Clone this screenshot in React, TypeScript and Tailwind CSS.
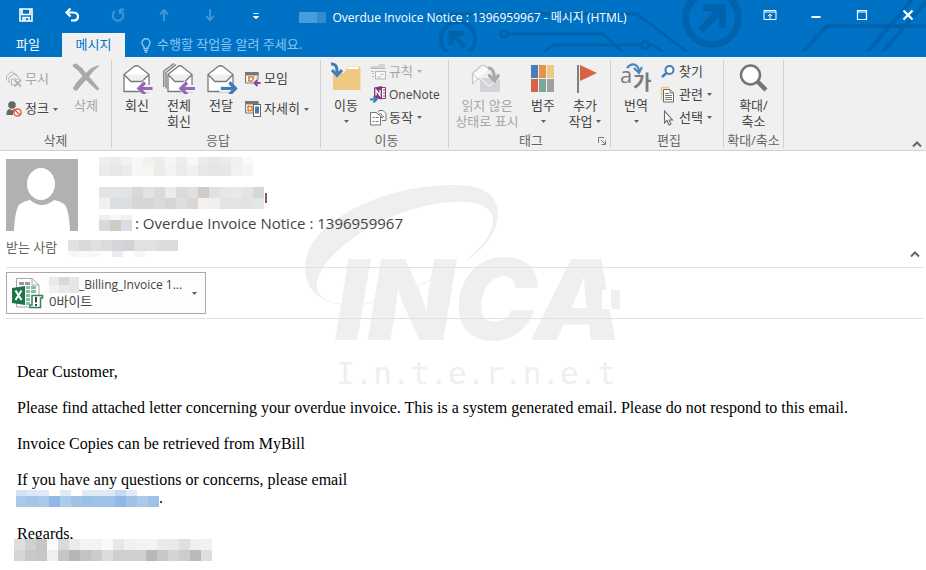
import type { ReactNode } from 'react';

// ---------------- MOSAIC (redacted text) ----------------
interface MosaicRow {
  h: number;
  c: string;
}

function Mosaic({ rows, cell = 11, className = '' }: { rows: MosaicRow[]; cell?: number; className?: string }) {
  const cols = Math.max(...rows.map((r) => r.c.split(' ').length));
  const height = rows.reduce((sum, r) => sum + r.h, 0);
  let y = 0;
  return (
    <svg aria-hidden="true" className={`shrink-0 ${className}`} width={cols * cell} height={height} shapeRendering="crispEdges">
      {rows.map((r, i) => {
        const top = y;
        y += r.h;
        return r.c.split(' ').map((color, j) =>
          color === '-' ? null : <rect key={`${i}-${j}`} x={j * cell} y={top} width={cell} height={r.h} fill={`#${color}`} />
        );
      })}
    </svg>
  );
}

// ---------------- ICONS ----------------
const Envelope = () => (
  <path d="M2 12.500 L12 4.500 Q14.500 3 17 4.500 L27 12.500 V29.500 H2 Z M2 12.500 L9 19.500 H20 L27 12.500" fill="#fff" stroke="#7a7a7a" strokeWidth="1.300" />
);

const ArrowLeft = () => (
  <path d="M30.500 26.500 H17 M23 20.500 L17 26.500 L23 32.500" fill="none" stroke="#9467b8" strokeWidth="3.200" />
);

const icons: Record<string, ReactNode> = {
  ignore: (
    <svg width="16" height="16" fill="none" stroke="#b4b4b4">
      <path d="M.5 9.500 V5 L5.500 .8 L11 4 M3 12 V6.500 L8 3 L13 6 M10 14 H5.500 V8 H15" />
      <path d="M8.500 9 L15 15.500 M15 9 L8.500 15.500" strokeWidth="1.800" />
    </svg>
  ),
  junk: (
    <svg width="16" height="16">
      <circle cx="6" cy="4" r="3.800" fill="#666" />
      <path d="M.5 14 Q0 8.500 4 8 L6 9.500 L8 8 L9 8.500 Q6.500 10.500 7 14 Z" fill="#666" />
      <circle cx="11.500" cy="11.500" r="3.600" fill="#fff" stroke="#d9603f" strokeWidth="1.500" />
      <path d="M9 9 L14 14" stroke="#d9603f" strokeWidth="1.500" />
    </svg>
  ),
  remove: (
    <svg width="32" height="32">
      <path d="M2.500 5 Q4 1.500 7 3 Q12 6 16 12 Q22 5 30 4 Q23 10 19 15.500 Q24 21 29.500 28 L27 29.500 Q21 24 16 19 Q11 24 7.500 29 Q4 31 3 27 Q7 20 12.500 15 Q8 9 2.500 5 Z" fill="#a9a9a9" />
    </svg>
  ),
  reply: (
    <svg width="34" height="33" viewBox="-2 -1 34 33" className="-mb-px">
      <Envelope />
      <path d="M13.500 26.500 L22 18 V23 H31 V30 H22 V33 Z" fill="#f0f0f0" />
      <ArrowLeft />
    </svg>
  ),
  replyAll: (
    <svg width="34" height="33" viewBox="-1 -1 34 33" className="-mb-px">
      <path d="M.8 25 V9 L11 1.500 M3 26.500 V10.500 L13 2.500" fill="none" stroke="#7a7a7a" strokeWidth="1.300" />
      <g transform="translate(3 0)">
        <path d="M2 12.500 L12 4.500 Q14 3 16 4.500 L26 12.500 V29.500 H2 Z M2 12.500 L9 19.500 H19 L26 12.500" fill="#fff" stroke="#7a7a7a" strokeWidth="1.300" />
      </g>
      <path d="M14.500 26.500 L22 18 V23 H32 V30 H22 V33 Z" fill="#f0f0f0" />
      <path d="M32 26.500 H18 M24 20.500 L18 26.500 L24 32.500" fill="none" stroke="#9467b8" strokeWidth="3.200" />
    </svg>
  ),
  forward: (
    <svg width="34" height="33" viewBox="-2 -1 34 33" className="-mb-px">
      <Envelope />
      <path d="M13.500 24 H22 V18 L31 26.500 L24 33 V30 H13.500 Z" fill="#f0f0f0" />
      <path d="M15 26.500 H29 M23.500 20.500 L29.500 26.500 L23.500 32.500" fill="none" stroke="#3f7cb8" strokeWidth="3.200" />
    </svg>
  ),
  meeting: (
    <svg width="16" height="16">
      <path d="M.5 1.500 H13 V12 H.5 Z" fill="#fff" stroke="#777" />
      <path d="M0 1 H13.500 V4.500 H0 Z" fill="#777" />
      <path d="M3.500 5 V12 M9.500 5 V12 M1 7 H13 M1 10 H13" stroke="#bbb" strokeDasharray="1 1" />
      <rect x="4" y="6" width="4" height="4" fill="#fff" stroke="#e07b28" strokeWidth="1.500" />
      <path d="M8 9 H16 V15 H8 Z" fill="#f0f0f0" />
      <path d="M15.500 12 H10 M12.500 9 L9.500 12 L12.500 15" fill="none" stroke="#8246a8" strokeWidth="2" />
    </svg>
  ),
  more: (
    <svg width="16" height="16">
      <path d="M.5 .8 H13 V12 H.5 Z" fill="#fff" stroke="#777" />
      <path d="M0 0 H13.500 V3.500 H0 Z" fill="#777" />
      <path d="M3.500 4 V12 M1 6 H8 M1 10 H8" stroke="#bbb" strokeDasharray="1 1" />
      <rect x="3" y="5.500" width="4" height="4" fill="#fff" stroke="#e07b28" strokeWidth="1.500" />
      <rect x="8.500" y="3.500" width="7" height="12" fill="#fff" stroke="#666" />
      <rect x="10" y="5.500" width="4" height="7" fill="#3f7cb8" />
    </svg>
  ),
  move: (
    <svg width="32" height="32">
      <path d="M3 12 H14 L18 5 H29 L30.500 7 V29 H3 Z" fill="#efc981" />
      <path d="M18.500 5.500 H28.500 V8 H17 Z" fill="#fff" />
      <path d="M1 0 H10 V8 H15 L7 17 L2 12 Z" fill="#f0f0f0" />
      <path d="M1 3 Q7 2.500 7 10 V13 M2 9 L7 14.500 L12 9" fill="none" stroke="#3f7cb8" strokeWidth="3" />
    </svg>
  ),
  rules: (
    <svg width="16" height="16" fill="none" stroke="#b8b8b8">
      <path d="M1 5 V2.500 H8 L9.500 .5 H14.500 V5" fill="#d2d2d2" stroke="#d2d2d2" />
      <path d="M1 4.500 H15 M1 7.500 H4 M2 9.500 H4 M2 12.500 H4" />
      <rect x="5.500" y="7.500" width="10" height="7.500" fill="#f8f8f8" />
      <path d="M10.500 10.500 H13.500 M7 13 H11" />
    </svg>
  ),
  onenote: (
    <svg width="17" height="17">
      <path d="M9 1.500 H15.500 V12.500 H9 Z" fill="#fff" stroke="#80397b" />
      <path d="M13 4 H16 M13 7 H16 M13 10 H16" stroke="#80397b" />
      <path d="M4 1.500 L12 0 V13.500 L4 12 Z" fill="#80397b" />
      <path d="M6 9.500 V4 L10 9.500 V4" fill="none" stroke="#fff" strokeWidth="1.300" />
      <path d="M0 13.500 H6 M3.500 10.500 L6.500 13.500 L3.500 16.500" fill="none" stroke="#3f7cb8" strokeWidth="2" />
    </svg>
  ),
  actions: (
    <svg width="17" height="16" fill="none" stroke="#777">
      <path d="M8 2.500 L9 .5 H13 L16 3.500 V10.500 H12" fill="#f8f8f8" />
      <path d="M.5 2.500 H6 L10.500 6 V15 H.5 Z" fill="#fff" />
      <path d="M2.500 7.500 H4.500 M5.500 7.500 H8.500 M2.500 11.500 H4.500 M5.500 11.500 H8.500 M9 4 Q12 2.500 12 7 M10 6 L12 8 L14 6" />
    </svg>
  ),
  unread: (
    <svg width="32" height="32" viewBox="2 0 32 32">
      <path d="M3.500 23 V12.500 L12 5 Q14 3.500 16 5 L20 8" fill="#fafafa" stroke="#c4c4c4" strokeWidth="1.200" />
      <path d="M3.500 13 L9 18 M3.500 23 L9 18 H16" fill="none" stroke="#c4c4c4" />
      <path d="M11 17 H31 V31 H11 Z" fill="#d6d3d8" />
      <path d="M11 17 L20 25 L31 17" fill="none" stroke="#f2f2f2" strokeWidth="1.200" />
      <path d="M19 7 Q25 6.500 25.500 18 M19.500 13.500 L25.500 20 L30 13.500" fill="none" stroke="#a9a9a9" strokeWidth="3.200" />
    </svg>
  ),
  categories: (
    <svg width="32" height="32" viewBox="1 0 32 32" shapeRendering="crispEdges">
      <rect x="5" y="4" width="7" height="13" fill="#4a7ebb" />
      <rect x="13" y="4" width="7" height="13" fill="#e69248" />
      <rect x="21" y="4" width="7" height="13" fill="#efc981" />
      <rect x="5" y="18" width="7" height="13" fill="#d96245" />
      <rect x="13" y="18" width="7" height="13" fill="#79a898" />
      <rect x="21" y="18" width="7" height="13" fill="#a0a0a0" />
    </svg>
  ),
  flag: (
    <svg width="32" height="32" viewBox="1 0 32 32">
      <path d="M9 4 H11 V32 H9 Z" fill="#808080" />
      <path d="M12 4 L29 12 L12 20 Z" fill="#d96245" />
    </svg>
  ),
  translate: (
    <svg width="32" height="32" className="overflow-visible">
      <text x="0" y="22" fontSize="22" fill="#7a7a7a" className="font-['Open_Sans',sans-serif]">a</text>
      <text x="13" y="29" fontSize="20" fontWeight="600" fill="#7a7a7a" className="font-['Noto_Sans_CJK_KR',sans-serif]">가</text>
      <path d="M7 7 Q12 1 17 5 Q19 7 19 11 M14 7 L19 12 L22 6" fill="none" stroke="#4a85c0" strokeWidth="2.200" />
    </svg>
  ),
  find: (
    <svg width="16" height="16" fill="none" stroke="#3f7cb8">
      <circle cx="9.500" cy="6" r="4" strokeWidth="2" fill="#fff" />
      <path d="M6.500 9 L2 13" strokeWidth="2.500" />
    </svg>
  ),
  related: (
    <svg width="16" height="17">
      <path d="M1.500 14 V1.500 H9" fill="none" stroke="#efc981" strokeWidth="1.500" />
      <path d="M3.500 3.500 H10 L13.500 7 V16 H3.500 Z" fill="#fff" stroke="#666" />
      <path d="M5 7.500 H9 M5 9.500 H12 M5 11.500 H12 M5 13.500 H12 M10 4 V7 H13" fill="none" stroke="#777" />
    </svg>
  ),
  select: (
    <svg width="16" height="16">
      <path d="M4.500 1 V13 L7 10.500 L9 15 L11 14 L9 10 H12.500 Z" fill="#fff" stroke="#6a6a6a" strokeWidth="1.100" />
    </svg>
  ),
  zoom: (
    <svg width="32" height="32" viewBox="1 0 32 32" fill="none" stroke="#757575">
      <circle cx="13.500" cy="14" r="9.500" strokeWidth="2.500" fill="#fff" />
      <path d="M20 20 L29 29" strokeWidth="4.500" />
    </svg>
  ),
};

const Caret = ({ dim = false }: { dim?: boolean }) => (
  <svg aria-hidden="true" width="5" height="3" className="inline-block shrink-0">
    <path d="M0 0 H5 L2.500 3 Z" fill={dim ? '#b0b0b0' : '#606060'} />
  </svg>
);

// ---------------- RIBBON PARTS ----------------
interface ItemProps {
  icon: string;
  label: string;
  disabled?: boolean;
  caret?: boolean;
}

function BigButton({ icon, label, disabled, caret, second, wide }: ItemProps & { second?: string; wide?: boolean }) {
  return (
    <button
      disabled={disabled}
      className={`flex flex-col items-center pt-px leading-4 whitespace-nowrap text-[#444] disabled:text-[#a6a6a6] ${wide ? 'w-[70px]' : 'w-[42px]'}`}
    >
      {icons[icon]}
      <span className="mt-1">{label}</span>
      {(second || caret) && (
        <span className="flex h-4 items-center gap-1">
          {second}
          {caret && <Caret />}
        </span>
      )}
    </button>
  );
}

function SmallButton({ icon, label, disabled, caret, tall }: ItemProps & { tall?: boolean }) {
  return (
    <button
      disabled={disabled}
      className={`flex items-center whitespace-nowrap text-[#444] disabled:text-[#a6a6a6] ${tall ? 'h-[30px]' : 'h-[23px]'}`}
    >
      <span className="mr-0.5 w-[17px]">{icons[icon]}</span>
      {label}
      {caret && <span className="ml-1 flex"><Caret dim={disabled} /></span>}
    </button>
  );
}

function Group({ title, className, children, launcher }: { title: string; className: string; children: ReactNode; launcher?: boolean }) {
  return (
    <section aria-label={title} className={`flex flex-col border-r border-[#d2d2d2] ${className}`}>
      <div className="flex h-[74px]">{children}</div>
      <div className="flex h-[14px] items-center">
        <span className="flex-1 text-center whitespace-nowrap text-[#666]">{title}</span>
        {launcher && (
          <button aria-label="태그 옵션" className="-ml-3 w-3">
            <svg width="8" height="8" fill="none" stroke="#777">
              <path d="M.5 6 V.5 H6 M3 3 L7 7 M7.500 3.500 V7.500 H3.500" />
            </svg>
          </button>
        )}
      </div>
    </section>
  );
}

const Chevron = () => (
  <svg width="10" height="7">
    <path d="M1 5.500 L5 1.500 L9 5.500" fill="none" stroke="#666" strokeWidth="2" />
  </svg>
);

// ---------------- TITLE BAR ----------------
const quickIcons: { name: string; art: ReactNode; dim?: boolean }[] = [
  { name: '저장', art: <path d="M1 1 H13 V13 H1 Z M3 1 V6.500 H11 V1 M4 13 V9.500 H10 V13 M6 10 V13" strokeWidth="1.600" /> },
  { name: '실행 취소', art: <path d="M5.500 .5 L1.500 4.500 L5.500 8.500 M1.500 4.500 H8 Q13 4.500 13 8.500 Q13 12.500 8 12.500 H6" strokeWidth="2.200" /> },
  { name: '다시 실행', dim: true, art: <path d="M9 1.500 H13 M9 1 V6 M10 3 A5.300 5.300 0 1 1 4 3" strokeWidth="2" /> },
  { name: '이전 항목', dim: true, art: <path d="M7 13 V2 M3 6.500 L7 2 L11 6.500" strokeWidth="2" /> },
  { name: '다음 항목', dim: true, art: <path d="M7 1 V12 M3 8 L7 12 L11 8" strokeWidth="2" /> },
  { name: '도구 모음 사용자 지정', art: <path d="M4.500 5.500 H9.500 M5 8.500 H9 L7 10.500 Z" strokeWidth="1.200" /> },
];

const windowIcons: { name: string; art: ReactNode }[] = [
  { name: '리본 메뉴 표시 옵션', art: <path d="M1 2.500 H13 V11.500 H1 Z M1 4 H13 M7 11 V6 M5 8 L7 6 L9 8" /> },
  { name: '최소화', art: <path d="M2.500 9 H11.500" strokeWidth="2" /> },
  { name: '최대화', art: <path d="M2.500 2.500 H11.500 V11.500 H2.500 Z M2.500 4 H11.500" strokeWidth="1.200" /> },
  { name: '닫기', art: <path d="M2.500 2.500 L11.500 11.500 M11.500 2.500 L2.500 11.500" strokeWidth="2.200" /> },
];

const Circuit = () => (
  <svg aria-hidden="true" className="pointer-events-none absolute top-0 right-0" width="496" height="52" fill="none" stroke="#0063ad" strokeWidth="3">
    <circle cx="28" cy="39" r="17" strokeWidth="4" />
    <path d="M35 47 L22 34 M21 45 V33.500 H34" strokeWidth="5" />
    <circle cx="74" cy="34" r="3.500" />
    <path d="M78 34 H173 L193 52 M111 54 L123 45 H211 M8 14 H207 L260 54" />
    <circle cx="215" cy="45" r="3.500" />
    <path d="M219 45 H223 L235 54" />
    <circle cx="282" cy="18" r="26.500" strokeWidth="7" />
    <path d="M271 30 L291 9 M273 7.500 H292.500 V28" strokeWidth="7" />
    <path d="M371 54 L397 26 H496 M436 54 L482 0 M451 54 L496 2" strokeWidth="4" />
  </svg>
);

function TitleBar() {
  return (
    <header className="relative bg-[#0072c6] text-white">
      <Circuit />
      <div className="relative grid h-[33px] grid-cols-[1fr_auto_1fr] items-center">
        <div className="flex gap-8 pl-[19px]">
          {quickIcons.map((q) => (
            <button key={q.name} aria-label={q.name} disabled={q.dim} className="-mt-1 disabled:opacity-25">
              <svg width="14" height="14" fill="none" stroke="#fff">{q.art}</svg>
            </button>
          ))}
        </div>
        <h1 className="flex items-center gap-1.5 pt-0.5 whitespace-nowrap">
          <Mosaic rows={[{ h: 11, c: '4a9ddb 4a9ddb 2e8dd4' }]} cell={9} />
          Overdue Invoice Notice : 1396959967 - 메시지 (HTML)
        </h1>
        <div className="flex justify-end gap-8 pr-[11px]">
          {windowIcons.map((w) => (
            <button key={w.name} aria-label={w.name} className="-mt-1">
              <svg width="14" height="14" fill="none" stroke="#fff">{w.art}</svg>
            </button>
          ))}
        </div>
      </div>
      <nav className="relative flex h-6 items-stretch text-[13px]">
        <button className="w-[62px] pr-1.5">파일</button>
        <button className="w-[63px] bg-[#f0f0f0] text-[#0072c6]">메시지</button>
        <label className="flex items-center gap-1.5 pl-4">
          <svg aria-hidden="true" width="10" height="15" fill="none" stroke="#8cc5f0" strokeWidth="1.400">
            <path d="M3 10.500 V9 Q1 7 1 4.800 A4 4 0 0 1 9 4.800 Q9 7 7 9 V10.500 Z M3 12.500 H7 M4 14.300 H6" />
          </svg>
          <input aria-label="작업 검색" placeholder="수행할 작업을 알려 주세요." className="w-44 bg-transparent outline-none placeholder:text-[#8cc5f0]" />
        </label>
      </nav>
    </header>
  );
}

function Ribbon() {
  return (
    <div className="flex items-start border-b border-[#d0d0d0] bg-[#f0f0f0] pt-[3px] pb-0.5 text-[13px]">
      <Group title="삭제" className="w-28">
        <div className="flex w-[65px] flex-col pt-1 pl-1.5">
          <SmallButton icon="ignore" label="무시" disabled tall />
          <SmallButton icon="junk" label="정크" caret tall />
        </div>
        <BigButton icon="remove" label="삭제" disabled />
      </Group>
      <Group title="응답" className="w-[209px] pl-1">
        <BigButton icon="reply" label="회신" />
        <BigButton icon="replyAll" label="전체" second="회신" />
        <BigButton icon="forward" label="전달" />
        <div className="flex flex-col pt-1 pl-[3px]">
          <SmallButton icon="meeting" label="모임" tall />
          <SmallButton icon="more" label="자세히" caret tall />
        </div>
      </Group>
      <Group title="이동" className="w-32 pl-1">
        <BigButton icon="move" label="이동" caret />
        <div className="flex flex-col pl-[3px]">
          <SmallButton icon="rules" label="규칙" disabled caret />
          <span className="text-xs"><SmallButton icon="onenote" label="OneNote" /></span>
          <SmallButton icon="actions" label="동작" caret />
        </div>
      </Group>
      <Group title="태그" className="w-[162px] pl-[3px]" launcher>
        <BigButton icon="unread" label="읽지 않은" second="상태로 표시" disabled wide />
        <BigButton icon="categories" label="범주" caret />
        <BigButton icon="flag" label="추가" second="작업" caret />
      </Group>
      <Group title="편집" className="w-[113px] pl-1">
        <BigButton icon="translate" label="번역" caret />
        <div className="flex flex-col pl-[3px]">
          <SmallButton icon="find" label="찾기" />
          <SmallButton icon="related" label="관련" caret />
          <SmallButton icon="select" label="선택" caret />
        </div>
      </Group>
      <Group title="확대/축소" className="w-[60px] items-center">
        <BigButton icon="zoom" label="확대/" second="축소" />
      </Group>
      <button aria-label="리본 메뉴 축소" className="mr-1 ml-auto self-end">
        <Chevron />
      </button>
    </div>
  );
}

// ---------------- WATERMARK ----------------
const Watermark = () => (
  <svg aria-hidden="true" className="pointer-events-none absolute top-[30px] left-1/2 -translate-x-1/2 overflow-visible" width="320" height="212" fill="#efefef">
    <path
      fillRule="evenodd"
      d="M42 124 C14 122 -2 104 3 78 C12 38 80 4 152 4 C186 4 200 18 193 44 C188 60 176 72 160 82 C178 68 192 50 190 37 C187 24 172 20 150 21 C92 24 30 62 16 94 C8 112 22 122 42 123 Z"
    />
    <path d="M58 124 Q100 116 152 86" fill="none" stroke="#efefef" />
    <text x="32" y="159" fontSize="112" fontWeight="900" fontStyle="italic" className="font-[Inter,'Liberation_Sans',sans-serif]">INCA</text>
    <path d="M299 109 H308 V128 H299 Z" fill="#fff" />
    <path d="M308 109 H317 V128 H308 Z" />
    <text x="33" y="203" fontSize="31" className="font-['DejaVu_Sans_Mono',monospace]">I.n.t.e.r.n.e.t</text>
  </svg>
);

// ---------------- MESSAGE ----------------
function MessageHeader() {
  return (
    <div className="relative mr-0.5 ml-1.5 border-b border-[#e1e1e1] pt-1.5 pb-[9px]">
      <div className="flex">
        <svg role="img" aria-label="보낸 사람" width="72" height="72" className="mt-0.5 shrink-0">
          <path d="M0 0 H72 V72 H0 Z" fill="#b1b1b1" />
          <ellipse cx="35" cy="25" rx="14" ry="16" fill="#fff" />
          <path d="M8 72 Q9 49 14 45 Q18 42 24 41 Q30 46 36 46 Q42 46 48 41 Q54 42 58 45 Q63 49 64 72 Z" fill="#fff" />
        </svg>
        <div className="ml-[21px] flex flex-col">
          <Mosaic
            rows={[
              { h: 8, c: 'f0efef ebebeb f0f2f1 f8f8f7 f1f1ef ececeb f5f6f9 ededeb f8f8f8 eaebeb e5e8e8 ebebea f1f0f1 f8f9f9' },
              { h: 11, c: 'ebebea e7e7e6 ecebec f6f8f8 f6f5f2 ececec f2f4f4 eaebeb f1f1f0 e5e7e8 e3e6e5 e6e6e7 f1f1f0 f2f4f6' },
            ]}
          />
          <div className="mt-[11px] flex items-center">
            <Mosaic
              rows={[
                { h: 11, c: 'e5e4e3 e1e5e3 e1e3e5 d9d8d7 e3e2e1 dadada ebebed d8dade dfdfdf d1cbc8 dfe1e2 e5e7e9 e8e8e8 e5e4e3 d5d8d8' },
                { h: 11, c: 'f1f0ef dadee1 dddee1 d7d7d5 d6d6d4 dadad9 d3d6d8 dededd d7d7d6 f2f1f0 edf0ef e3e3e6 e5e4e3 e4e2e1 e2e6e9' },
              ]}
            />
            <svg aria-hidden="true" width="3" height="10"><path d="M2 0 V10" stroke="#8a5a62" strokeWidth="2" /></svg>
          </div>
          <h2 className="mt-1 flex items-center text-[15px] leading-5 text-[#444]">
            <Mosaic
              className="mr-[3px]"
              rows={[
                { h: 5, c: 'efefef f8f7f7 f1f1f1' },
                { h: 11, c: 'dad9d6 cfcbc7 d8dee3' },
              ]}
            />
            : Overdue Invoice Notice : 1396959967
          </h2>
        </div>
      </div>
      <div className="mt-[5px] flex h-5 items-center text-[13px] text-[#666]">
        받는 사람
        <Mosaic
          className="ml-[11px]"
          rows={[
            { h: 11, c: 'e3e2e1 d9d9da dfe0e3 dcdbdb d3d5da d4d3d1 dfe2e2 dfe1e5 dedddb dadbdc' },
            { h: 6, c: 'f5f7f9 f9f9f9 f9f9f9 - ebeced - f5f5f5 - - -' },
          ]}
        />
        <button aria-label="머리글 축소" className="mt-3 mr-1 ml-auto">
          <Chevron />
        </button>
      </div>
    </div>
  );
}

function Attachment() {
  return (
    <div className="relative mr-0.5 ml-1.5 border-b border-[#e1e1e1] py-1">
      <button className="flex h-[42px] w-[200px] items-center border border-[#ababab] bg-[#fdfdfd] pl-[5px] text-left text-[13px] text-[#444]">
        <svg aria-hidden="true" width="32" height="32" className="shrink-0">
          <path d="M4.500 1.500 H20 L27 8 V30 H4.500 Z" fill="#fff" stroke="#a6a6a6" />
          <path d="M20 1.500 V8 H27" fill="none" stroke="#a6a6a6" />
          <path d="M7 5 H12 V8 H7 Z M13 5 H18 V8 H13 Z" fill="#999" />
          <path d="M14 9 H18 V12 H14 Z M19 9 H24 V12 H19 Z M14 13 H18 V16 H14 Z M19 13 H24 V16 H19 Z M14 17 H18 V20 H14 Z M14 21 H18 V24 H14 Z M14 25 H18 V28 H14 Z" fill="#86bf9c" />
          <path d="M0 11 L13 9 V28 L0 26 Z" fill="#1f7246" />
          <path d="M3.500 13.500 L9.500 23 M9.500 13.500 L3.500 23" stroke="#fff" strokeWidth="2" />
          <path d="M20 18.500 H30.500 V21 H28.500 V30.500 H18 V28 H20 Z" fill="#fff" stroke="#2f8558" strokeWidth="1.500" />
          <path d="M24 20 V25.500 M24 27 V29" stroke="#444" strokeWidth="2" />
        </svg>
        <span className="ml-[5px] flex flex-1 flex-col leading-4">
          <span className="flex text-xs leading-4">
            <Mosaic
              cell={10}
              rows={[
                { h: 8, c: 'e9e9e9 d8d8d8 e6e6e6' },
                { h: 8, c: 'f1f1f1 e9e9e9 e5e5e5' },
              ]}
            />
            _Billing_Invoice 1...
          </span>
          <span>0바이트</span>
        </span>
        <span className="mr-2 flex"><Caret /></span>
      </button>
    </div>
  );
}

export default function App() {
  return (
    <div className="min-h-screen bg-white font-['Open_Sans','Noto_Sans_CJK_KR',sans-serif] text-xs">
      <TitleBar />
      <Ribbon />
      <main className="relative">
        <Watermark />
        <MessageHeader />
        <Attachment />
        <article className="relative space-y-[18px] px-[17px] pt-11 font-['Liberation_Serif',serif] text-base leading-[18px] text-black">
          <p>Dear Customer,</p>
          <p>Please find attached letter concerning your overdue invoice. This is a system generated email. Please do not respond to this email.</p>
          <p>Invoice Copies can be retrieved from MyBill</p>
          <div>
            <p>If you have any questions or concerns, please email</p>
            <div className="-ml-px flex h-[18px] items-end">
              <Mosaic
                rows={[
                  { h: 6, c: 'd3e3f4 dde9f6 dde9f6 - dfeaf7 - dde9f6 dde9f6 dde9f6 c4daf2 dfeaf7 - -' },
                  { h: 11, c: 'a9c9ea a2c5e9 abcaeb 8fb8e4 adcbeb 9fc3e7 9bc0e6 9dc1e7 9fc3e7 8fb8e4 9fc3e7 abcaeb 9dc1e7' },
                ]}
              />
              .
            </div>
          </div>
          <div>
            <p>Regards,</p>
            <Mosaic
              className="relative -mt-1 -ml-[3px]"
              rows={[
                { h: 11, c: 'dedede d0d0d0 c6c6c6 fbfbfb dadada ebebeb f3f3f3 f3f3f3 f9f9f9 e7e7e7 f1f1f1 f3f3f3 f3f3f3 ebebeb e9e9e9 dfdfdf efefef f2f2f2' },
                { h: 11, c: 'd6d6d6 c8c8c8 c6c6c6 efefef c6c6c6 b6b6b6 c3c3c3 cccccc dcdcdc cfcfcf d0d0d0 d0d0d0 b8b8b8 c8c8c8 d4d4d4 cdcdcd bababa dedede' },
              ]}
            />
          </div>
        </article>
      </main>
    </div>
  );
}
